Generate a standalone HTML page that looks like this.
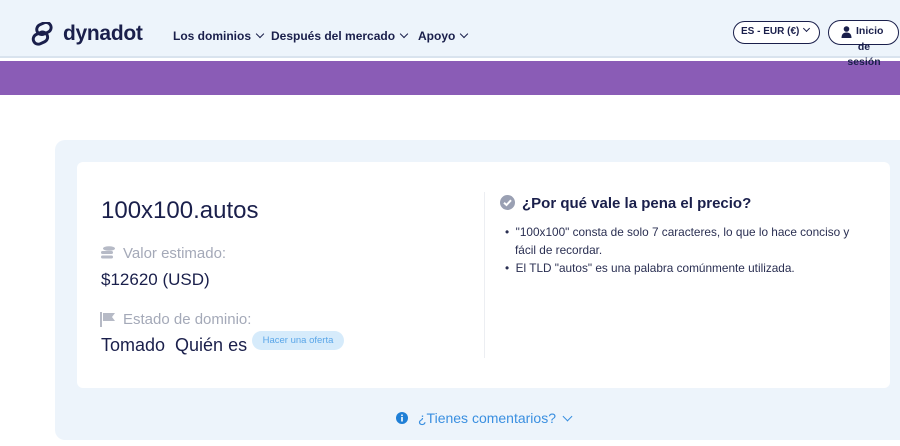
<!DOCTYPE html>
<html><head><meta charset="utf-8"><style>
*{margin:0;padding:0;box-sizing:border-box}
body{width:900px;height:446px;overflow:hidden;background:#fff;font-family:"Liberation Sans",sans-serif;color:#1a1f4b;position:relative}
.hdr{position:absolute;left:0;top:0;width:900px;height:58px;background:#edf4fb;border-bottom:2px solid #d9e3ee}
.band{position:absolute;left:0;top:61px;width:900px;height:34px;background:#8a5cb6}
.logo{position:absolute;left:30px;top:22px;display:flex;align-items:center;font-size:21px;font-weight:bold;color:#1a1f4b;letter-spacing:-0.3px}
.nav{position:absolute;top:29px;font-size:12px;font-weight:bold;color:#1a1f4b;white-space:nowrap}
.chev{display:inline-block;width:6px;height:6px;border-right:1.8px solid #1a1f4b;border-bottom:1.8px solid #1a1f4b;transform:rotate(45deg);margin-left:6px;position:relative;top:-3px}
.pill{position:absolute;border:1.5px solid #1a1f4b;border-radius:14px;background:#fff;font-size:10px;font-weight:bold;white-space:nowrap}
.panel{position:absolute;left:55px;top:140px;width:860px;height:300px;background:#edf4fb;border-radius:10px}
.card{position:absolute;left:77px;top:162px;width:813px;height:226px;background:#fff;border-radius:6px}
.muted{color:#a4a9b8;font-size:15px}
</style></head><body>
<div class="hdr"></div>
<div class="band"></div>
<div class="logo"><svg width="26" height="24" viewBox="0 0 28 26"><g fill="none" stroke="#1a1f4b" stroke-width="3.2"><rect x="7" y="1.5" width="16" height="11" rx="5.5" transform="rotate(-25 15 7)"/><rect x="3" y="12" width="16" height="11" rx="5.5" transform="rotate(-25 11 17)"/></g></svg><span style="margin-left:7px">dynadot</span></div>
<div class="nav" style="left:173px">Los dominios<span class="chev"></span></div>
<div class="nav" style="left:271px">Después del mercado<span class="chev"></span></div>
<div class="nav" style="left:418px">Apoyo<span class="chev"></span></div>
<div class="pill" style="left:733px;top:21px;width:87px;height:23px;line-height:20px;padding-left:7px">ES - EUR (€)<span class="chev" style="width:5px;height:5px;margin-left:5px"></span></div>
<div class="pill" style="left:828px;top:20px;width:71px;height:25px"></div>
<svg style="position:absolute;left:841px;top:26px" width="11" height="12" viewBox="0 0 11 12"><circle cx="5.5" cy="3" r="2.8" fill="#1a1f4b"/><path d="M0.5 12 Q0.5 6.5 5.5 6.5 Q10.5 6.5 10.5 12Z" fill="#1a1f4b"/></svg>
<div style="position:absolute;left:856px;top:25px;font-size:10.5px;font-weight:bold">Inicio</div>
<div style="position:absolute;left:836px;top:40px;width:56px;text-align:center;font-size:10.5px;font-weight:bold;line-height:15px">de<br>sesión</div>
<div class="panel"></div>
<div class="card"></div>
<div style="position:absolute;left:101px;top:197px;font-size:24px">100x100.autos</div>
<svg style="position:absolute;left:100px;top:246px" width="16" height="14" viewBox="0 0 16 14"><g fill="#b6bac6"><ellipse cx="9" cy="2.5" rx="6" ry="2.3"/><rect x="1" y="5" width="12" height="3" rx="1.5"/><rect x="1" y="9.5" width="12" height="3" rx="1.5"/></g></svg>
<div class="muted" style="position:absolute;left:123px;top:245px">Valor estimado:</div>
<div style="position:absolute;left:101px;top:270px;font-size:17px">$12620 (USD)</div>
<svg style="position:absolute;left:100px;top:312px" width="16" height="15" viewBox="0 0 16 15"><rect x="0" y="0" width="2" height="15" fill="#b6bac6"/><path d="M3 1 H15 L12 5 L15 9 H3Z" fill="#b6bac6"/></svg>
<div class="muted" style="position:absolute;left:123px;top:311px">Estado de dominio:</div>
<div style="position:absolute;left:101px;top:335px;font-size:18px">Tomado&nbsp; Quién es</div>
<div style="position:absolute;left:252px;top:331px;width:92px;height:19px;border-radius:10px;background:#d6ebfb;color:#5aa6e8;font-size:9.5px;line-height:19px;text-align:center">Hacer una oferta</div>
<div style="position:absolute;left:484px;top:192px;width:1px;height:166px;background:#eceef2"></div>
<svg style="position:absolute;left:500px;top:195px" width="15" height="15"><circle cx="7.5" cy="7.5" r="7.5" fill="#9aa0b3"/><path d="M4 7.8 L6.5 10 L11 5.2" fill="none" stroke="#fff" stroke-width="2"/></svg>
<div style="position:absolute;left:522px;top:195px;font-size:15px;font-weight:bold">¿Por qué vale la pena el precio?</div>
<ul style="position:absolute;left:505px;top:223px;width:380px;font-size:11.8px;line-height:18px;list-style:none;color:#2a2f52">
<li>•&nbsp; "100x100" consta de solo 7 caracteres, lo que lo hace conciso y<br><span style="padding-left:10px">fácil de recordar.</span></li>
<li>•&nbsp; El TLD "autos" es una palabra comúnmente utilizada.</li>
</ul>
<svg style="position:absolute;left:396px;top:412px" width="12" height="12"><circle cx="6" cy="6" r="6" fill="#1f7fd6"/><rect x="5.2" y="5" width="1.6" height="4.5" fill="#fff"/><circle cx="6" cy="3.3" r="0.9" fill="#fff"/></svg>
<div style="position:absolute;left:418px;top:410px;font-size:14px;color:#3a8fe0">¿Tienes comentarios? <span class="chev" style="border-color:#3a8fe0;width:7px;height:7px;margin-left:4px"></span></div>
</body></html>
